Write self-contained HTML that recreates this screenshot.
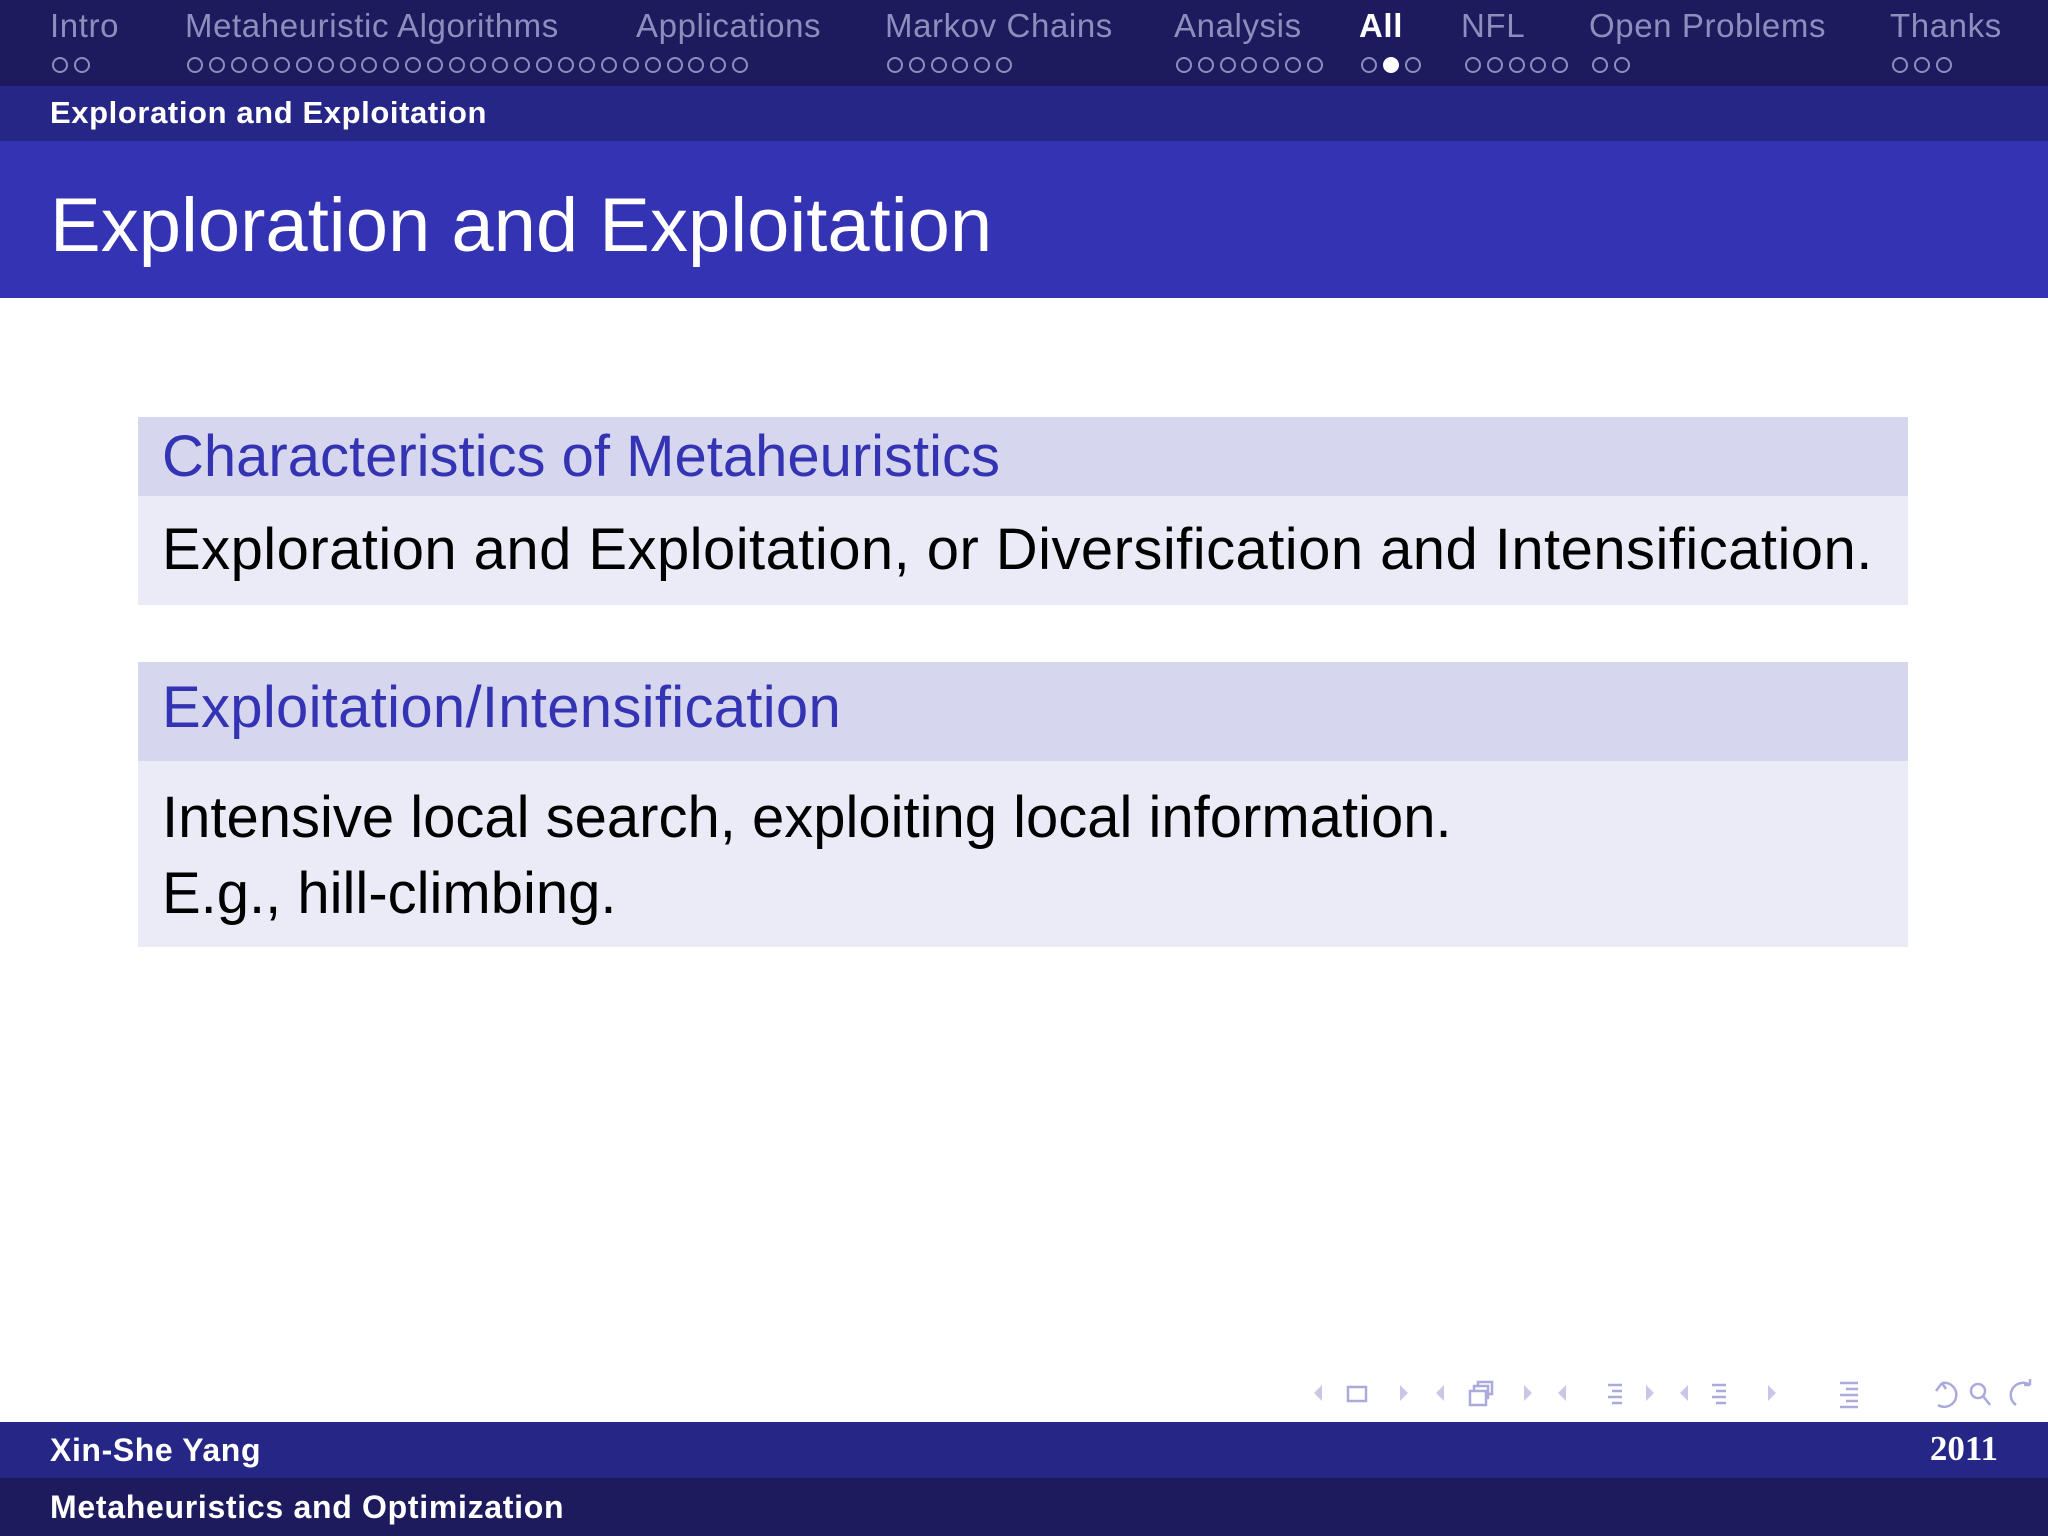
<!DOCTYPE html>
<html><head><meta charset="utf-8"><style>
*{margin:0;padding:0;box-sizing:border-box}
body{width:2048px;height:1536px;position:relative;background:#fff;font-family:"Liberation Sans",sans-serif;overflow:hidden}
.abs{position:absolute;white-space:nowrap}
.nav{font-size:33px;color:#8e8ebd;top:7px;letter-spacing:0.6px}
.dots{top:57px;height:16px;display:flex;gap:5.8px}
.d{width:16px;height:16px;border:2px solid #8e8ebd;border-radius:50%}
.d.f{background:#fff;border-color:#fff}
</style></head><body>
<div class="abs" style="left:0;top:0;width:2048px;height:86px;background:#1d1b5e"></div>
<div class="abs" style="left:0;top:86px;width:2048px;height:55px;background:#262687"></div>
<div class="abs" style="left:0;top:141px;width:2048px;height:157px;background:#3333b3"></div>

<div class="abs nav" style="left:50px">Intro</div>
<div class="abs nav" style="left:185px">Metaheuristic Algorithms</div>
<div class="abs nav" style="left:636px">Applications</div>
<div class="abs nav" style="left:885px">Markov Chains</div>
<div class="abs nav" style="left:1174px">Analysis</div>
<div class="abs nav" style="left:1359px;color:#fff;font-weight:bold">All</div>
<div class="abs nav" style="left:1461px">NFL</div>
<div class="abs nav" style="left:1589px">Open Problems</div>
<div class="abs nav" style="left:1890px">Thanks</div>

<div class="abs dots" style="left:52px"><i class="d"></i><i class="d"></i></div>
<div class="abs dots" style="left:187px" id="m"></div>
<div class="abs dots" style="left:887px"><i class="d"></i><i class="d"></i><i class="d"></i><i class="d"></i><i class="d"></i><i class="d"></i></div>
<div class="abs dots" style="left:1176px"><i class="d"></i><i class="d"></i><i class="d"></i><i class="d"></i><i class="d"></i><i class="d"></i><i class="d"></i></div>
<div class="abs dots" style="left:1361px"><i class="d"></i><i class="d f"></i><i class="d"></i></div>
<div class="abs dots" style="left:1465px"><i class="d"></i><i class="d"></i><i class="d"></i><i class="d"></i><i class="d"></i></div>
<div class="abs dots" style="left:1592px"><i class="d"></i><i class="d"></i></div>
<div class="abs dots" style="left:1892px"><i class="d"></i><i class="d"></i><i class="d"></i></div>
<script>var m=document.getElementById('m');for(var i=0;i<26;i++){var e=document.createElement('i');e.className='d';m.appendChild(e);}</script>

<div class="abs" style="left:50px;top:95px;font-size:31px;font-weight:bold;color:#fff;letter-spacing:0.6px">Exploration and Exploitation</div>
<div class="abs" style="left:50px;top:182px;font-size:76px;color:#fff">Exploration and Exploitation</div>

<div class="abs" style="left:138px;top:417px;width:1770px;height:79px;background:#d6d6ee"></div>
<div class="abs" style="left:138px;top:496px;width:1770px;height:109px;background:#ebebf7"></div>
<div class="abs" style="left:162px;top:423px;font-size:58px;color:#3333b3">Characteristics of Metaheuristics</div>
<div class="abs" style="left:162px;top:516px;font-size:58px;color:#000;letter-spacing:0.45px">Exploration and Exploitation, or Diversification and Intensification.</div>

<div class="abs" style="left:138px;top:662px;width:1770px;height:99px;background:#d6d6ee"></div>
<div class="abs" style="left:138px;top:761px;width:1770px;height:186px;background:#ebebf7"></div>
<div class="abs" style="left:162px;top:674px;font-size:58px;color:#3333b3;letter-spacing:0.3px">Exploitation/Intensification</div>
<div class="abs" style="left:162px;top:780px;font-size:58px;color:#000;line-height:76px">Intensive local search, exploiting local information.<br>E.g., hill-climbing.</div>

<svg class="abs" style="left:1310px;top:1375px" width="730" height="36" viewBox="0 0 730 36">
<g fill="#c8c8e6" stroke="none">
<polygon points="12,10 4,18 12,26"/><polygon points="90,10 98,18 90,26"/>
<polygon points="134,10 126,18 134,26"/><polygon points="214,10 222,18 214,26"/>
<polygon points="256,10 248,18 256,26"/><polygon points="336,10 344,18 336,26"/>
<polygon points="378,10 370,18 378,26"/><polygon points="458,10 466,18 458,26"/>
</g>
<g fill="none" stroke="#aaaadb" stroke-width="2.5">
<rect x="38" y="12" width="18" height="14"/>
<rect x="160" y="16" width="16" height="14"/><path d="M164 16v-5h14v12h-2M168 11v-4h14v12h-4"/>
<path d="M298 10h14M302 16h10M298 22h14M302 28h10M402 10h14M406 16h10M402 22h14M406 28h10M530 8h18M536 14h12M530 20h18M536 26h12M530 32h18"/>
<path d="M632 8a12 12 0 1 1 -4 22M632 8l-6 8M632 8l4 6"/>
<circle cx="668" cy="16" r="7"/><path d="M673 21l7 9"/>
<path d="M706 30a12 12 0 1 1 14 -20M720 10l-6 0M720 10l0 -6"/>
</g></svg>

<div class="abs" style="left:0;top:1422px;width:2048px;height:56px;background:#262687"></div>
<div class="abs" style="left:0;top:1478px;width:2048px;height:58px;background:#1d1b5e"></div>
<div class="abs" style="left:50px;top:1432px;font-size:32px;font-weight:bold;color:#fff;letter-spacing:0.6px">Xin-She Yang</div>
<div class="abs" style="right:50px;top:1429px;font-size:35px;font-weight:bold;color:#fff;font-family:'Liberation Serif',serif">2011</div>
<div class="abs" style="left:50px;top:1489px;font-size:32px;font-weight:bold;color:#fff;letter-spacing:0.7px">Metaheuristics and Optimization</div>
</body></html>
